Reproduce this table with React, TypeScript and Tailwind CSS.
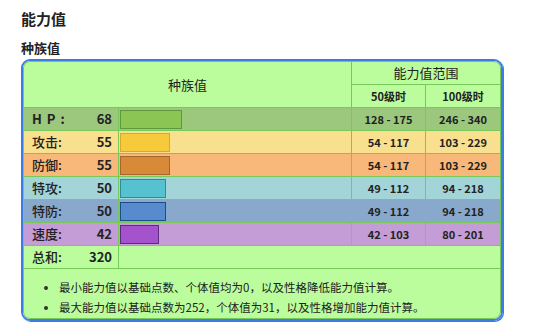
import React from "react"

const stats = [
  { label: "H P :", value: 68, min: "128 - 175", max: "246 - 340", row: "bg-[#9bc87d]", bar: "bg-[#8bc553] border-[#5d9a3b]", bold: true },
  { label: "攻击:", value: 55, min: "54 - 117", max: "103 - 229", row: "bg-[#f9e08f]", bar: "bg-[#f7ca3c] border-[#d6aa2b]", bold: false },
  { label: "防御:", value: 55, min: "54 - 117", max: "103 - 229", row: "bg-[#f8b87a]", bar: "bg-[#d98a38] border-[#a8662d]", bold: false },
  { label: "特攻:", value: 50, min: "49 - 112", max: "94 - 218", row: "bg-[#a3d4d8]", bar: "bg-[#57c2cf] border-[#2a8c9e]", bold: false },
  { label: "特防:", value: 50, min: "49 - 112", max: "94 - 218", row: "bg-[#89a9cc]", bar: "bg-[#568ccd] border-[#1b4d8e]", bold: false },
  { label: "速度:", value: 42, min: "42 - 103", max: "80 - 201", row: "bg-[#c49cd6]", bar: "bg-[#a553cc] border-[#5c2d7b]", bold: false },
]

export default function App() {
  const total = stats.reduce((s, x) => s + x.value, 0)

  return (
    <div className="w-[536px] h-[336px] bg-white pl-[21px] pt-[8px] text-[#222] font-['Noto_Sans_CJK_SC',sans-serif]">
      <h2 className="text-[15px] font-bold leading-[22px]">能力值</h2>
      <h3 className="mt-[9px] text-[13px] font-bold leading-[18px]">种族值</h3>

      <div className="mt-[2px] w-[482px] border-2 border-[#3d7ce6] rounded-[9px] overflow-hidden shadow-[1px_1px_0_#3d7ce6]">
        <div className="border border-[#78c95a] rounded-[7px] overflow-hidden bg-[#78c95a]">
          <div className="grid grid-cols-[94px_232px_73px_74px] grid-rows-[repeat(9,22px)] gap-px">
            {/* cabecera */}
            <div className="col-span-2 row-span-2 bg-[#bbfd9d] flex items-center justify-center text-[13px]">
              种族值
            </div>
            <div className="col-span-2 bg-[#bbfd9d] flex items-center justify-center text-[13px]">
              能力值范围
            </div>
            <div className="bg-[#bbfd9d] flex items-center justify-center text-[11px] font-bold">50级时</div>
            <div className="bg-[#bbfd9d] flex items-center justify-center text-[11px] font-bold">100级时</div>

            {stats.map((s) => (
              <React.Fragment key={s.label}>
                <div className={`${s.row} flex items-center justify-between pl-[8px] pr-[6px] text-[13px]`}>
                  <span className={s.bold ? "font-bold tracking-[1px]" : "font-medium"}>{s.label}</span>
                  <span className="font-bold">{s.value}</span>
                </div>
                <div className={`${s.row} flex items-center pl-[1px]`}>
                  <div
                    className={`${s.bar} h-[19px] border`}
                    style={{ width: `${(s.value / 255) * 234}px` }}
                  />
                </div>
                <div className={`${s.row} flex items-center justify-center text-[11px] font-bold`}>{s.min}</div>
                <div className={`${s.row} flex items-center justify-center text-[11px] font-bold`}>{s.max}</div>
              </React.Fragment>
            ))}

            <div className="bg-[#bbfd9d] flex items-center justify-between pl-[8px] pr-[6px] text-[13px]">
              <span className="font-medium">总和:</span>
              <span className="font-bold">{total}</span>
            </div>
            <div className="col-span-3 bg-[#bbfd9d]" />
          </div>

          <div className="mt-px h-[49px] bg-[#bbfd9d] pt-[11px] pl-[25px] text-[11.5px]">
            <ul className="list-disc pl-[10px] space-y-[6px] leading-[14px] marker:text-[#333]">
              <li>最小能力值以基础点数、个体值均为0，以及性格降低能力值计算。</li>
              <li>最大能力值以基础点数为252，个体值为31，以及性格增加能力值计算。</li>
            </ul>
          </div>
        </div>
      </div>
    </div>
  )
}
